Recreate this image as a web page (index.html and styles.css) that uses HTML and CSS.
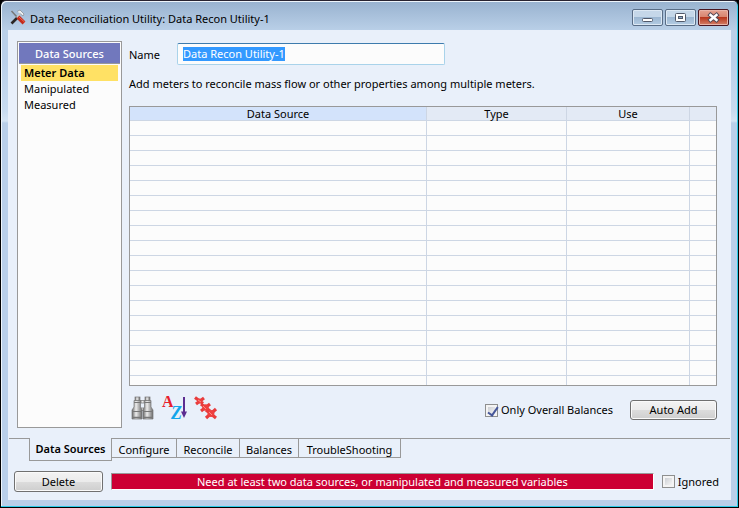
FILE: index.html
```html
<!DOCTYPE html>
<html lang="en">
<head>
<meta charset="utf-8">
<title>Data Reconciliation Utility: Data Recon Utility-1</title>
<link rel="stylesheet" href="styles.css">
</head>
<body>
<div class="window">
  <header class="titlebar">
    <svg class="app-icon" viewBox="0 0 16 16" aria-hidden="true">
      <path d="M1.500 2L7 8" stroke="#777" stroke-width="1.500"/>
      <path d="M7 2.500L10 1l4 4-1 2-3-2.500" fill="#eef0f2" stroke="#8a9098" stroke-width=".8"/>
      <path d="M10.500 4L6.500 9" stroke="#c3c8cc" stroke-width="1.800"/>
      <path d="M7 9L1.500 14.500" stroke="#2b2523" stroke-width="2.600"/>
      <path d="M8 8l6 6" stroke="#c32a1c" stroke-width="4"/>
      <path d="M9 8l5.500 5" stroke="#ef6a55" stroke-width="1"/>
    </svg>
    <h1 class="title">Data Reconciliation Utility: Data Recon Utility-1</h1>
    <div class="captions">
      <button class="caption" type="button" aria-label="Minimize"><svg viewBox="0 0 29 15"><rect x="9.500" y="8.500" width="10" height="3" rx="1" fill="#fff" stroke="#51596a"/></svg></button>
      <button class="caption" type="button" aria-label="Maximize"><svg viewBox="0 0 29 15"><rect x="9.500" y="3.500" width="10" height="8" rx="1" fill="#fff" stroke="#51596a"/><rect x="12.500" y="6.500" width="4" height="2" fill="#8eabc8" stroke="#51596a"/></svg></button>
      <button class="caption close" type="button" aria-label="Close"><svg viewBox="0 0 29 15"><path d="M11.500 5l6 5M17.500 5l-6 5" stroke="#544a56" stroke-width="4.400" stroke-linecap="square"/><path d="M11.500 5l6 5M17.500 5l-6 5" stroke="#fff" stroke-width="2.400" stroke-linecap="square"/></svg></button>
    </div>
  </header>
  <div class="client">
    <main class="page">
      <nav class="sources">
        <h2 class="sources-title">Data Sources</h2>
        <ul class="source-list">
          <li class="source current">Meter Data</li>
          <li class="source">Manipulated</li>
          <li class="source">Measured</li>
        </ul>
      </nav>
      <section class="detail">
        <div class="name-row">
          <label class="name-label" for="name">Name</label>
          <div class="field"><input class="name-input" id="name" type="text" value="Data Recon Utility-1"></div>
        </div>
        <p class="hint">Add meters to reconcile mass flow or other properties among multiple meters.</p>
        <div class="grid-box">
          <table class="grid">
            <colgroup><col><col class="col-type"><col class="col-use"><col class="col-end"></colgroup>
            <thead><tr><th class="sorted">Data Source</th><th>Type</th><th>Use</th><th></th></tr></thead>
            <tbody>
              <tr><td></td><td></td><td></td><td></td></tr>
              <tr><td></td><td></td><td></td><td></td></tr>
              <tr><td></td><td></td><td></td><td></td></tr>
              <tr><td></td><td></td><td></td><td></td></tr>
              <tr><td></td><td></td><td></td><td></td></tr>
              <tr><td></td><td></td><td></td><td></td></tr>
              <tr><td></td><td></td><td></td><td></td></tr>
              <tr><td></td><td></td><td></td><td></td></tr>
              <tr><td></td><td></td><td></td><td></td></tr>
              <tr><td></td><td></td><td></td><td></td></tr>
              <tr><td></td><td></td><td></td><td></td></tr>
              <tr><td></td><td></td><td></td><td></td></tr>
              <tr><td></td><td></td><td></td><td></td></tr>
              <tr><td></td><td></td><td></td><td></td></tr>
              <tr><td></td><td></td><td></td><td></td></tr>
              <tr><td></td><td></td><td></td><td></td></tr>
              <tr><td></td><td></td><td></td><td></td></tr>
              <tr><td></td><td></td><td></td><td></td></tr>
            </tbody>
          </table>
        </div>
        <div class="tools">
          <button class="tool" type="button" aria-label="Find">
            <svg viewBox="0 0 24 24">
              <defs><linearGradient id="steel"><stop offset="0" stop-color="#666"/><stop offset=".4" stop-color="#eee"/><stop offset="1" stop-color="#6b6b6b"/></linearGradient></defs>
              <g fill="url(#steel)" stroke="#777" stroke-width=".7">
                <rect x="9" y="4.500" width="6" height="2.500"/><rect x="9" y="12" width="5" height="2.500"/>
                <path d="M3 4.500h6.500V11l1.500 3v9H1v-9l2-3z"/><path d="M13.500 4.500H20V11l2 3v9H12v-9l1.500-3z"/>
                <rect x="4" y="1" width="5" height="3.500"/><rect x="14" y="1" width="5" height="3.500"/>
              </g>
              <path d="M1 15.500h10M12 15.500h10M3 6.500h6.500M13.500 6.500H20" stroke="#777"/>
              <path d="M1 21.500h10M12 21.500h10" stroke="#777" stroke-width="1.500"/>
            </svg>
          </button>
          <button class="tool" type="button" aria-label="Sort A to Z">
            <svg viewBox="0 0 24 24">
              <text class="letter" x="-1" y="11" fill="#e8202c">A</text>
              <text class="letter slant" x="8" y="23" fill="#14a5ea">Z</text>
              <path d="M21 1v17" stroke="#5c2d91" stroke-width="2"/><path d="M18 15.500h6L21 22z" fill="#5c2d91"/>
            </svg>
          </button>
          <button class="tool" type="button" aria-label="Clear all">
            <svg viewBox="0 0 24 24">
              <g stroke="#e83c3c" stroke-width="3.200">
                <path d="M0 1.500l8 6M9 2L1 8"/><path d="M6 8l9 7M15 8l-9 7"/><path d="M11 14l10 8M21 13l-10 9"/>
              </g>
              <g fill="#ee4040"><circle cx="4.500" cy="5" r="2.400"/><circle cx="10.500" cy="11.500" r="3.200"/><circle cx="16" cy="17.500" r="3.400"/></g>
              <path d="M3 4l3 2M8 10l3 3M14 16l3 3" stroke="#ff8a80"/>
            </svg>
          </button>
          <label class="check"><input class="box" type="checkbox" checked>Only Overall Balances</label>
          <button class="button" type="button">Auto Add</button>
        </div>
      </section>
    </main>
    <div class="tabs" role="tablist">
      <button class="tab active" type="button" role="tab" aria-selected="true">Data Sources</button>
      <button class="tab configure" type="button" role="tab">Configure</button>
      <button class="tab reconcile" type="button" role="tab">Reconcile</button>
      <button class="tab balances" type="button" role="tab">Balances</button>
      <button class="tab trouble" type="button" role="tab">TroubleShooting</button>
    </div>
    <footer class="footer">
      <button class="button" type="button">Delete</button>
      <div class="status" role="status">Need at least two data sources, or manipulated and measured variables</div>
      <label class="check"><input class="box" type="checkbox">Ignored</label>
    </footer>
  </div>
</div>
</body>
</html>
```
FILE: styles.css
```css
* { box-sizing: border-box; }
body { margin: 0; background: #000; }
body, button, input { font-family: "Noto Sans", "Segoe UI", sans-serif; font-size: 11px; line-height: 16px; color: #000; }
button { padding: 0; cursor: pointer; }
svg { fill: none; overflow: visible; }

.window {
  display: flex; flex-direction: column; min-height: 100vh;
  padding: 0 7px 7px; border: 1px solid #000; border-top-color: #282330; border-radius: 6px 6px 0 0;
  background: linear-gradient(#98b2cf, #bad0e8 30px, #bad0ea 60px, #c8dbef 110px, #d4e4f4 120px, #b9cfe9 122px);
  box-shadow: inset -1px -1px #2bcbe8, inset 1px 1px #eef5fb;
}
.titlebar { display: flex; height: 29px; padding: 8px 2px 0; gap: 4px; }
.app-icon { width: 16px; height: 16px; }
.title { flex: 1; margin: 0; font-size: 11px; font-weight: 400; line-height: 20px; white-space: nowrap; }
.captions { display: flex; gap: 2px; }
.caption {
  width: 31px; height: 17px; border: 1px solid #596d86; border-radius: 2px;
  background: linear-gradient(#c5d7e9 45%, #9cb7d2 50%, #b4cce3); box-shadow: inset 0 0 0 1px #dce8f4;
}
.caption svg { display: block; width: 29px; height: 15px; }
.close { border-color: #491622; background: linear-gradient(#e5a291, #d88570 45%, #b8371d 50%, #d38069); box-shadow: inset 0 0 0 1px #e9b4a8; }

.client { flex: 1; display: flex; flex-direction: column; background: #e9f0fa; }
.page { flex: 1; display: flex; gap: 7px; padding: 11px 14px 10px 9px; }
.sources { width: 105px; padding: 1px; border: 1px solid #999; background: #fcfcfc; }
.sources-title { margin: 0; height: 21px; background: #7178bd; border-bottom: 1px solid #999; color: #fff; font-size: 11px; font-weight: 500; line-height: 22px; text-align: center; }
.source-list { margin: 0; padding: 1px 2px; list-style: none; }
.source { padding-left: 3px; line-height: 16px; }
.current { background: #ffe164; font-weight: 600; }

.detail { flex: 1; display: flex; flex-direction: column; min-width: 0; }
.name-row { display: flex; padding-top: 2px; }
.name-label { width: 48px; line-height: 24px; }
.field { display: flex; align-items: flex-start; width: 268px; height: 22px; padding: 3px 5px; border: 1px solid #a9d3ea; border-top-color: #3d7bad; border-radius: 2px; background: #fcfcfc; }
.name-input { field-sizing: content; height: 14px; padding: 0; border: 0; outline: 0; background: #3399ff; color: #fff; line-height: 14px; }
.hint { margin: 0; padding: 9px 0 14px; white-space: nowrap; }
.grid-box { height: 280px; overflow: hidden; border: 1px solid #999; background: #fcfcfc; }
.grid { width: 100%; table-layout: fixed; border-collapse: separate; border-spacing: 0; }
.col-type { width: 140px; }
.col-use { width: 123px; }
.col-end { width: 26px; }
.grid th, .grid td { height: 15px; padding: 0; border: solid #cdd6e4; border-width: 0 1px 1px 0; }
.grid th { height: 14px; background: #e3eaf5; font-weight: 400; line-height: 13px; }
.grid .sorted { background: #d3e3fb; }
.grid th:last-child, .grid td:last-child { border-right: 0; }

.tools { display: flex; align-items: flex-end; gap: 8px; padding: 10px 0 0 2px; }
.tool { width: 24px; height: 24px; border: 0; background: none; }
.tool svg { display: block; width: 24px; height: 24px; }
.letter { font: bold 16px "Liberation Serif", serif; }
.slant { font-style: italic; font-size: 18px; }
.check { display: flex; align-items: center; gap: 3px; line-height: 20px; white-space: nowrap; }
.tools .check { margin-left: auto; margin-right: 9px; }
.box {
  appearance: none; flex: none; width: 13px; height: 13px; margin: 0; border: 1px solid #8e8f8f;
  background: linear-gradient(135deg, #cdd0d5, #f5f5f5) 2px 2px / 7px 7px no-repeat, #f4f4f4;
}
.box:checked { position: relative; }
.box:checked::after { content: ""; position: absolute; left: 4px; top: 0; width: 4px; height: 9px; border: solid #46579a; border-width: 0 2px 2px 0; transform: rotate(35deg); }
.button {
  width: 87px; height: 20px; border: 1px solid #707070; border-radius: 3px;
  background: linear-gradient(#f3f3f3, #ebebeb 50%, #dcdcdc 52%, #cecece); box-shadow: inset 0 0 0 1px #fafafa;
}

.tabs { display: flex; align-items: flex-start; margin: 0 1px; padding-left: 20px; background: linear-gradient(#999, #999) 0 0 / 100% 1px no-repeat; }
.tab { height: 20px; border: solid #999; border-width: 1px 1px 1px 0; background: #e9f0fa; line-height: 22px; text-align: center; white-space: nowrap; }
.active { width: 83px; height: 23px; border-width: 0 1px 1px; font-weight: 600; }
.configure { width: 65px; }
.reconcile { width: 63px; }
.balances { width: 59px; }
.trouble { width: 102px; }

.footer { display: flex; align-items: center; gap: 8px; padding: 10px 12px 8px 6px; }
.footer .button { width: 89px; height: 21px; }
.status { flex: 1; height: 17px; border: 1px solid #999; border-color: #999 #fff #fff #999; background: #cc0033; color: #fff; line-height: 15px; text-align: center; white-space: nowrap; }
```
